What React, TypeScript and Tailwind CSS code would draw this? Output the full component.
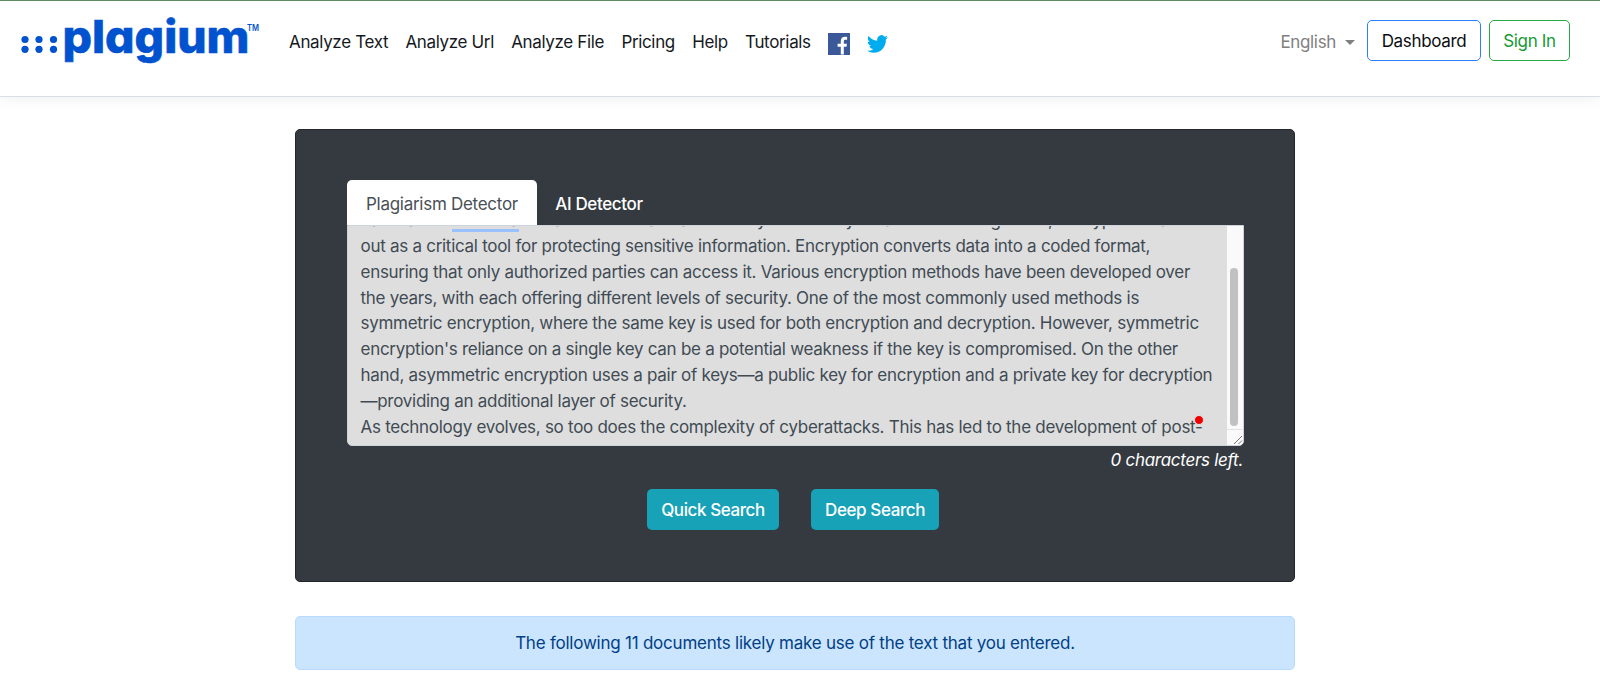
import { clsx } from "clsx";

const navLinks = ["Analyze Text", "Analyze Url", "Analyze File", "Pricing", "Help", "Tutorials"];

// Submitted text, one entry per wrapped line
const textLines = [
  "has made it essential for all of us to have a robust cybersecurity measures. Among these, encryption stands",
  "out as a critical tool for protecting sensitive information. Encryption converts data into a coded format,",
  "ensuring that only authorized parties can access it. Various encryption methods have been developed over",
  "the years, with each offering different levels of security. One of the most commonly used methods is",
  "symmetric encryption, where the same key is used for both encryption and decryption. However, symmetric",
  "encryption's reliance on a single key can be a potential weakness if the key is compromised. On the other",
  "hand, asymmetric encryption uses a pair of keys—a public key for encryption and a private key for decryption",
  "—providing an additional layer of security.",
  "As technology evolves, so too does the complexity of cyberattacks. This has led to the development of post-",
];

function Logo() {
  return (
    <svg width="240" height="60" viewBox="0 0 240 60" className="shrink-0 overflow-visible" fill="#0052cf">
      {[5, 19, 33.5].map((cx) => (
        <g key={cx}>
          <circle cx={cx} cy="24.5" r="3.6" />
          <circle cx={cx} cy="34.3" r="3.6" />
        </g>
      ))}
      <text
        x="42.5"
        y="38"
        textLength="187"
        lengthAdjust="spacingAndGlyphs"
        className="font-['Inter'] text-[45px] font-extrabold tracking-normal"
        style={{ fontFeatureSettings: '"cv11" 1' }}
        stroke="#0052cf"
        strokeWidth="0.6"
      >
        plagium
      </text>
      <text
        x="227"
        y="16"
        textLength="12"
        lengthAdjust="spacingAndGlyphs"
        className="font-['Inter'] text-[9px] font-semibold tracking-normal"
      >
        TM
      </text>
    </svg>
  );
}

function FacebookIcon() {
  return (
    <svg width="22" height="22" viewBox="0 0 22 22" className="shrink-0">
      <rect width="22" height="22" fill="#3b5998" />
      <path
        fill="#fff"
        d="M12.8 21.4v-7.7H9.6v-2.9h3.2V8.2c0-2.9 1.7-4.4 4.3-4.4.9 0 1.5.1 2 .2v2.7h-1.6c-1.3 0-1.7.7-1.7 1.7v2.4h3.1l-.4 2.9h-2.7v7.7z"
      />
    </svg>
  );
}

function TwitterIcon() {
  return (
    <svg width="21" height="18" viewBox="0 2 24 20" preserveAspectRatio="none" className="shrink-0">
      <path
        fill="#00acee"
        d="M23.953 4.57a10 10 0 01-2.825.775 4.958 4.958 0 002.163-2.723c-.951.555-2.005.959-3.127 1.184a4.92 4.92 0 00-8.384 4.482C7.69 8.095 4.067 6.13 1.64 3.162a4.822 4.822 0 00-.666 2.475c0 1.71.87 3.213 2.188 4.096a4.904 4.904 0 01-2.228-.616v.06a4.923 4.923 0 003.946 4.827 4.996 4.996 0 01-2.212.085 4.936 4.936 0 004.604 3.417 9.867 9.867 0 01-6.102 2.105c-.39 0-.779-.023-1.17-.067a13.995 13.995 0 007.557 2.209c9.053 0 13.998-7.496 13.998-13.985 0-.21 0-.42-.015-.63A9.935 9.935 0 0024 4.59z"
      />
    </svg>
  );
}

function Header() {
  return (
    <header className="flex h-[97px] items-start border-t border-b border-t-[#5f8a63] border-b-[#dadfe5] bg-white pr-[30px] pl-5 tracking-[-0.34px] shadow-[0_4px_12px_rgba(0,0,0,0.05)]">
      <div className="mt-[14px]">
        <Logo />
      </div>
      <nav className="mt-[29px] ml-[29px] flex h-[26px] items-center gap-[17.2px] text-[#15191d]">
        {navLinks.map((link) => (
          <a key={link} href="#" className="whitespace-nowrap">
            {link}
          </a>
        ))}
        <a href="#" aria-label="Facebook" className="mt-px">
          <FacebookIcon />
        </a>
        <a href="#" aria-label="Twitter" className="mt-px">
          <TwitterIcon />
        </a>
      </nav>
      <div className="mt-[19px] ml-auto flex items-center">
        <button className="mr-[12px] flex items-center gap-[9px] pt-[5px] text-[#7f7f7f]">
          English
          <span className="mb-0.5 border-x-[5px] border-t-[5px] border-x-transparent border-t-[#7f7f7f]" />
        </button>
        <button className="mr-2 h-[41px] w-[114px] rounded-[5px] border border-[#2b7fff] pt-[3px] text-[#0b0d0f]">
          Dashboard
        </button>
        <button className="h-[41px] w-[81px] rounded-[5px] border border-[#28a745] pt-[3px] text-[#149a33]">
          Sign In
        </button>
      </div>
    </header>
  );
}

function Tab({ label, active = false }: { label: string; active?: boolean }) {
  return (
    <button
      className={clsx(
        "h-[45px] rounded-t-[5px] pt-[4px] text-center",
        active ? "w-[190px] bg-white text-[#495057]" : "w-[124px] font-medium tracking-[-0.35px] text-white",
      )}
    >
      {label}
    </button>
  );
}

function TextBox() {
  return (
    <div className="relative flex h-[221px] overflow-hidden rounded-b-[5px] border border-[#ced4da] bg-[#dedede]">
      <div className="flex min-w-0 flex-1 flex-col justify-end pb-[4.5px] pl-[12.5px] leading-[25.83px] text-[#414b54]">
        {textLines.map((line) => (
          <p key={line} className="whitespace-nowrap">
            {line}
          </p>
        ))}
      </div>
      {/* Scrollbar */}
      <div className="flex w-[16px] flex-col bg-[#fafafa]">
        <div className="flex-1 pt-[42px] pl-[3px]">
          <div className="h-[158px] w-[8px] rounded-full bg-[#c1c1c1]" />
        </div>
        <div className="flex h-4 items-end justify-end border-t border-[#e3e3e3]">
          <svg width="10" height="10" viewBox="0 0 10 10" stroke="#777" fill="none">
            <path d="M1 9L9 1M5.5 9L9 5.5" />
          </svg>
        </div>
      </div>
      <span className="absolute top-[2.5px] left-[104px] h-[3px] w-[67px] bg-[#99c1fb]" />
      <span className="absolute top-[188.5px] left-[845.5px] size-[10px] rounded-full border border-[#f5dcdc] bg-[#ee0000]" />
    </div>
  );
}

export default function App() {
  return (
    <div className="h-[694px] overflow-hidden bg-white font-['Inter',sans-serif] text-[17px] tracking-[-0.28px]">
      <Header />
      <main className="ml-[295px] w-[1000px] pt-8">
        <section className="h-[453px] rounded-[5px] border border-[#23272b] bg-[#343a40] pt-[50px] pr-[50px] pl-[51px]">
          <div className="flex">
            <Tab label="Plagiarism Detector" active />
            <Tab label="AI Detector" />
          </div>
          <TextBox />
          <p className="pt-px pr-px text-right leading-[26px] text-white italic">0 characters left.</p>
          <div className="mt-4 flex justify-center gap-8 pr-[5px] font-medium tracking-[-0.4px] text-white">
            <button className="h-[41px] w-[132px] rounded-[5px] bg-[#17a2b8] pt-[3px]">Quick Search</button>
            <button className="h-[41px] w-[128px] rounded-[5px] bg-[#17a2b8] pt-[3px]">Deep Search</button>
          </div>
        </section>
        <div className="mt-[34px] flex h-[54px] items-center justify-center rounded-[5px] border border-[#b8daff] bg-[#cce5ff] pt-0.5 tracking-[-0.23px] text-[#004085]">
          The following 11 documents likely make use of the text that you entered.
        </div>
      </main>
    </div>
  );
}
